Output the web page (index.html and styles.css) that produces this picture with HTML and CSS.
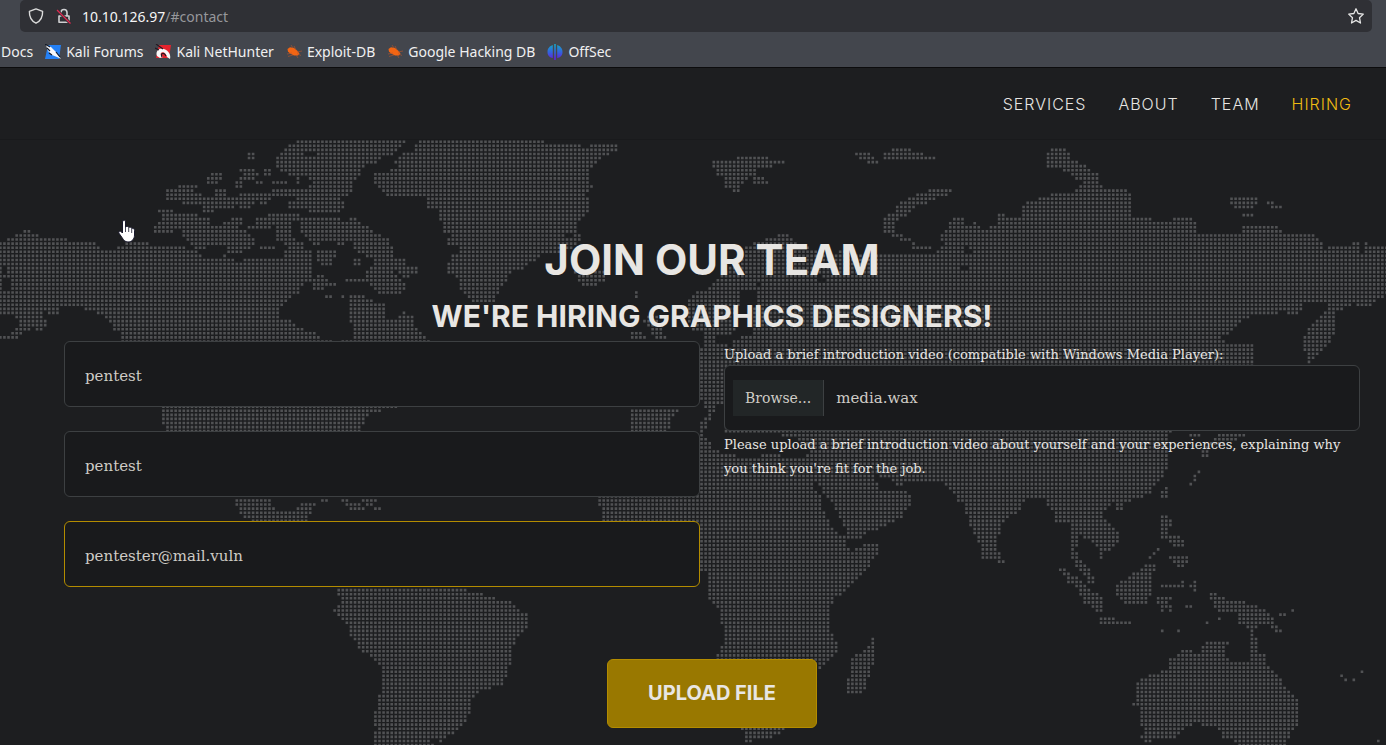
FILE: index.html
```html
<!DOCTYPE html>
<html lang="en">
<head>
<meta charset="utf-8">
<title>Join our team</title>
<link rel="stylesheet" href="styles.css">
</head>
<body>
<div class="browser">
  <div class="urlbar">
    <svg class="ui-icon" viewBox="0 0 16 16" fill="none" stroke="#dcdcdc" stroke-width="1.4" stroke-linejoin="round"><path d="M8 .9 14.6 3.3C14.8 9 12.400 13.200 8 15.200 3.600 13.200 1.200 9 1.400 3.300Z"/></svg>
    <svg class="ui-icon lock" viewBox="0 0 16 16" fill="none"><path d="M5 8V4.500a3 3 0 0 1 6 0V8M3 8h10v6.300H3Z" stroke="#cfcfd1" stroke-width="1.600" stroke-linejoin="round"/><path d="M1 2 14.500 15.500" stroke="#2f3035" stroke-width="3"/><path d="M1 2 14.500 15.500" stroke="#e22850" stroke-width="1.300"/></svg>
    <div class="address"><span class="host">10.10.126.97</span>/#contact</div>
    <button class="star" type="button" aria-label="Bookmark this page"><svg class="ui-icon" viewBox="0 0 16 16" fill="none" stroke="#e6e6e6" stroke-width="1.300" stroke-linejoin="round"><path d="M8 .8 10.100 5.500 15.300 6.100 11.500 9.700 12.500 15 8 12.400 3.500 15 4.500 9.700 .7 6.100 5.900 5.500Z"/></svg></button>
  </div>
  <nav class="bookmarks" aria-label="Bookmarks">
    <a href="#">Docs</a>
    <a href="#"><svg class="ui-icon" viewBox="0 0 16 16"><path d="M3 1h13l-2 14H0Z" fill="#2480f5"/><path d="M1 1 6 3 11 8 16 15 12 13 7 11 3 7Z" fill="#f5f7fa"/><path d="M0 0 5 3M2 4l3 3M4 9l3 2M11 8l4 5" stroke="#151b27" stroke-width="1.200" fill="none"/></svg>Kali Forums</a>
    <a href="#"><svg class="ui-icon" viewBox="0 0 16 16"><path d="M4 1h12l-2 13H1Z" fill="#e5242e"/><path d="M2 12C0 7 5 3 9 5 14 7 16 11 15 15L12 13C11 9 8 7 6 9 5 10 6 12 8 13L5 14Z" fill="#f8f8f8"/><path d="M1 0 8 5M0 4 4 6M7 13C5 9 9 8 11 12" stroke="#251922" stroke-width="1.200" fill="none"/></svg>Kali NetHunter</a>
    <a href="#"><svg class="ui-icon" viewBox="0 0 16 16"><use href="#bug"/></svg>Exploit-DB</a>
    <a href="#"><svg class="ui-icon" viewBox="0 0 16 16"><use href="#bug"/></svg>Google Hacking DB</a>
    <a href="#"><svg class="ui-icon" viewBox="0 0 16 16"><defs><linearGradient id="off" gradientUnits="userSpaceOnUse" x1="0" y1="0" x2="0" y2="16"><stop offset="0" stop-color="#16a9c4"/><stop offset=".5" stop-color="#3265dc"/><stop offset="1" stop-color="#6716df"/></linearGradient></defs><path d="M5.800 1v13C3 13.500 .5 12 .5 8S3 2 5.800 1ZM7.200 0h1.600v16H7.200ZM10.200 1c2.800 1 5.300 3 5.300 7S13 13.500 10.200 14Z" fill="url(#off)"/></svg>OffSec</a>
  </nav>
</div>
<header class="site-nav">
  <nav class="menu" aria-label="Main">
    <a href="#services">SERVICES</a>
    <a href="#about">ABOUT</a>
    <a href="#team">TEAM</a>
    <a class="active" href="#contact">HIRING</a>
  </nav>
</header>
<main class="contact" id="contact">
  <svg class="map" viewBox="0 140 1386 605" preserveAspectRatio="xMidYMin slice" aria-hidden="true">
    <defs>
      <g id="bug"><path d="M1.500 5 4 3.300 8 4 11 6.500 13.500 9.500 12 11.500 8 11.500 4 9.500 2 7.500Z" fill="#f26513"/><path d="M5 1 7 4M8 2 10 6M16 7 11 8M15 11.500l-4-2M1 10l5-1M2 12.500 7 11M12 14l-2-3" stroke="#b9562a" stroke-width=".6" fill="none"/></g>
      <path id="land" d="
M0 244L12 236 25 231 33 231 43 236 72 240 97 243 101 249 113 251 119 244 128 243 143 240 150 240 152 244 178 244 192 249 202 253 204 260 213 256 219 258 240 260 267 257 285 257 285 248 315 250 314 263 313 280 302 285 300 292 292 294 287 302 280 307 280 317 293 318 295 326 307 329 317 333 319 337 333 338 333 342 343 342 343 338 355 337 355 327 350 320 350 293 358 293 370 300 382 302 387 308 387 317 398 317 403 309 415 318 415 327 422 333 432 339 400 407 386 410 370 411 367 421 358 433 167 433 163 423 163 390 123 341 123 332 115 332 113 323 105 317 100 313 90 312 85 308 70 305 63 307 60 313 49 313 45 310 40 315 48 318 48 324 43 332 37 332 35 327 27 331 20 334 20 341 0 341 0 334 12 334 13 330 21 328 20 321 17 316 9 315 0 313Z
M3 265H7V272H3ZM3 280H12V289H3Z
M159 208H174L175 212H195L200 219H212L213 225 222 226 233 216H243L243 225 238 228 247 230 253 235 255 244 252 250H245L240 254 225 256 227 247 213 245 203 251 198 250 191 246 190 240 183 237 185 230H175L173 235H163L155 231 156 225 163 218Z
M167 191L175 188 180 183H199L198 188 190 190 202 191 203 197H217V188H227V195H240L239 202 235 207H220L213 212H204L203 207 192 204 183 203V199H167Z
M212 171H223L222 180 215 186H207L208 180ZM249 151H256V158H249ZM261 159H268V162H261Z
M241 167H253L255 171H260V178L247 179 243 181V187H237V180L242 176ZM241 191H272V199L263 207 258 202 252 207H241Z
M298 140H410L402 145 398 150 395 155 383 157 378 161 372 165 360 168 362 177 353 180 353 190 348 195 337 197 345 201V206L340 211H310L308 207H290V200L303 198 305 195H273V187L307 188 313 185 310 178 285 174 277 165 273 160 282 153 285 147 293 144ZM313 163H325V166H313ZM305 152H317V156H305Z
M265 168H270L275 173 271 178H265ZM273 179H288V183H273ZM296 178H300V186H296ZM257 180H264V183H257ZM285 211H300V218L294 223 293 230 295 238 303 242V248H287L286 243H278L277 230 277 223 270 230H248V226L257 222 258 217H268L271 211ZM261 246H277V251H261Z
M302 216H333L341 218V224L350 219H357L362 224 373 229 377 233 388 237 390 242 394 245 393 252 392 257H405L407 264H418V272H410V280H406L395 270 397 277 407 284 405 291 397 296H387L373 290 370 284H347V277H367V270L372 267V258L362 253 353 248V242L340 245 335 242 313 244 302 233Z
M317 250H337L333 267H325L317 260ZM354 256H362V264H354ZM316 272L329 277 331 282H338L341 288H334L330 286 320 292 313 287ZM325 293H333V297H325ZM342 293H346V300H342Z
M423 140H546V143H582V147H590V143H618V149L610 153 602 157 595 163 590 168V182L593 185 592 190 586 194 590 197 589 210 585 218 577 222V230L581 233 580 240 576 245 563 252 548 253 537 258 528 265 523 271H513L507 279 503 285 497 294 495 303H472L465 295 460 287 457 277 448 272 449 263 453 255 459 252 458 247H448V238L452 233 440 231 443 224 440 218V208L428 207 425 197 417 195 393 198 383 194 380 188 372 181V177L377 171H390L393 167 402 165 392 161 400 157 402 151 415 150 415 143ZM565 233H573V239H565Z
M575 271L585 268 607 271 605 280 600 284 590 287H582L577 278ZM635 290H638V297H635ZM671 301H675V304H671Z
M712 165L715 159H723L725 162 733 160 742 155H768V158H784V162L777 166 757 167 755 174 745 179 742 186 738 191H733L725 186V176L716 174ZM753 176L762 175 769 181 763 187 761 183H753Z
M850 151H870V156L878 159V163H868L866 158H858ZM883 155L888 151 895 147H911L912 151H923V155H935V158H911V162H895V158H883Z
M883 220L892 212 900 203 910 196 925 191 940 187H951V194L938 198 925 203 910 210 902 218 894 224 895 232 907 236 915 241 916 244H931V248H940L942 243 940 233 948 225 952 219H963L966 225 967 240 965 252 972 252 968 245V230L973 221 978 227 988 228 990 224 997 225V212H1003V216H1020L1025 213 1021 210V204L1033 200 1045 196 1057 191 1073 193 1078 187 1083 183 1078 180 1073 177 1067 173 1060 169H1050L1045 164V157L1049 151 1057 147H1061L1068 151V158L1077 160 1080 165 1088 167 1090 171H1100V175L1097 180 1103 190H1118L1123 187 1128 191 1133 196 1132 211 1130 216H1153V220H1170L1171 216H1189L1197 221V228L1199 235H1205L1207 229 1211 233H1238L1240 229 1243 224H1275L1278 229 1287 235H1303L1307 232 1318 237 1322 242 1320 247 1327 249 1328 244H1343L1348 247 1353 241H1358V252H1363V241H1368V244H1386V296L1377 298 1370 304 1367 308H1360L1353 304 1343 307 1342 312H1335V332L1330 340 1322 348 1313 357 1310 362H1307L1304 353 1303 345 1304 335 1308 327 1315 320 1322 313 1328 305 1318 302 1305 301 1302 308 1298 316H1288L1285 310 1278 313H1257L1248 316 1242 320 1235 327 1232 332 1223 334 1222 340 1227 343 1238 345 1248 342 1254 347V366H1200L1171 432 1167 435 1166 457 1167 465 1165 471 1160 478 1153 487 1147 495 1133 499 1121 502V511H1116L1115 503 1110 503 1105 508 1102 515 1108 522 1118 530V539L1112 547 1103 552 1101 557H1099L1097 549 1090 541 1080 536 1077 544 1074 548 1077 553 1084 562 1089 568 1093 576V585L1087 582 1082 573 1075 564 1071 556V522H1061L1060 524H1055L1053 513 1047 507 1045 499H1025L1020 511 1008 517 1000 524 999 535 995 542 997 548 1003 560V564H998L993 558 987 557H982L980 543 973 533 969 522 965 510 962 502H957L952 492 945 486 943 483H903L897 485 903 490 914 497 908 507 903 515 892 522 882 527 868 531 860 537H847L843 525 838 515 832 503 823 492 818 485 813 478 811 482 820 495 823 508 828 518 833 527 845 537 847 547 853 549 867 542H878V552L873 560 865 572 853 583 843 593 835 598 830 608V625L833 637 837 642V653L828 662 820 667 817 670 816 690 783 731 777 735 752 740H745L742 729 717 658V652L722 645 724 638V628L720 623V610L713 604 709 600V573H700L660 570 603 545V506L598 503V497L630 431H715L716 450 700 431 700 422 708 412 700 398V347L705 343 702 336V330H690L688 303 693 293 700 290 710 287 720 277 728 270 747 245 758 242 772 237 782 233 795 237V243L817 250 830 254 845 248 860 253H937L938 249 931 248 913 248 911 242 897 239 887 234 883 231Z
M740 292L753 290 762 279 755 295 753 332 735 339 732 346 718 344 714 334 728 337 735 330 731 318 740 303ZM818 275L827 277 825 283 818 281ZM960 264H968V270H960Z
M714 431H778L783 437 806 440 811 452 800 458 783 456 770 452 750 458 738 456 717 450ZM716 406H724V432H704L709 422ZM873 475L888 476 890 483 897 484 899 488 888 491 880 488Z
M632 330H642L646 336 642 341H632ZM643 320L652 310 660 317 657 327 663 330 666 341H655L652 332ZM632 407H682L673 415 670 425 667 432H631L632 420Z
M236 497H272L273 505 280 512H292L302 501H317L312 510 308 521H253L245 516 237 507ZM322 497H329V500H322ZM338 497L346 499 362 502 365 508H351L346 503ZM363 497H377V500H363ZM367 501H374V504H367ZM379 505L386 512H366ZM350 513H358V516H350ZM375 513H382V516H375ZM395 513H402V516H395Z
M343 586H463L472 591 487 594 497 598 512 602 517 608 524 611 529 616 528 626 522 631 515 641 512 647V662L508 670 504 682 495 687 482 688 472 697 471 711 467 719 459 727 450 735 445 740H440L430 737 435 746H374V733L379 729 374 723V712L378 708V696L382 693V668L374 660 369 654 361 651 358 643 350 636 349 627 343 621 334 612V606L342 604V598L338 595V590Z
M871 638H875L874 662 869 675 865 690 862 695H846L847 676 850 673 851 655 859 653 863 647 870 646Z
M1058 566H1065L1069 573 1075 576 1082 582 1093 590 1102 599V613H1096L1089 606 1081 599 1075 587 1066 581 1063 573H1058ZM1099 618L1103 614H1114L1115 618H1130L1131 622H1154V626H1127L1126 622H1099ZM1160 622H1170V626H1160ZM1156 626L1163 628V633H1159ZM1173 633L1177 627H1183L1180 633ZM1184 622H1192V626H1184ZM1204 618H1208V622H1204ZM1216 614H1220V618H1216Z
M1116 583L1123 579 1133 573 1140 567 1148 561H1151L1154 566 1153 573 1151 593 1147 600 1142 605H1127L1119 600 1116 593ZM1160 585H1179V589H1160ZM1180 581H1184V586H1180ZM1156 594H1171V598L1165 600 1171 604 1170 610 1163 609V613H1156L1160 607 1158 603 1152 600ZM1189 583L1195 578V593L1190 588ZM1184 602H1192V606H1184Z
M1160 517L1164 513 1171 517 1170 525H1167L1168 533H1180L1184 544 1174 548 1170 543 1163 537H1160ZM1155 545H1159V549H1155ZM1151 549H1155V553H1151ZM1147 553H1151V557H1147ZM1168 558L1173 554 1177 557 1181 553H1187L1186 562 1183 568 1176 564ZM1160 489L1165 485H1168V499H1164L1160 496Z
M1185 431H1199L1198 438H1190ZM1222 431H1244L1243 437 1230 441 1208 447 1207 458H1201V452L1207 443ZM1196 468H1200V475H1196ZM1192 475H1196V480H1192ZM1188 480H1192V484H1188Z
M1205 590H1215L1220 597 1230 598H1244L1245 602H1256L1260 607 1265 611 1273 615 1272 621 1280 628 1285 633H1278L1270 629 1265 623H1257L1253 630 1252 638H1257V651H1265V662L1270 668 1277 673 1281 680 1284 685 1294 693 1298 701V724L1290 729 1288 737 1284 746H1237L1230 739 1221 740V730L1213 725 1192 723 1180 730 1177 736H1157L1153 740H1144L1139 736 1143 730 1140 723 1139 709 1131 702 1135 697V680L1143 676 1157 672 1168 669V656L1175 657 1185 647H1192L1193 651H1200L1201 644 1205 639H1228L1227 646 1223 648V654L1229 658 1237 662H1246L1249 655V627L1244 626H1233L1237 622 1235 613 1231 610H1217L1213 604 1208 598Z
M1278 610H1290V606H1293V613H1285V617H1278ZM1311 622H1317V626H1311ZM1339 671H1343V675H1339ZM1343 675H1346V679H1350V683H1343ZM1351 675H1354V679H1351ZM1359 667H1363V671H1359ZM1376 736H1380V740H1376ZM1380 740H1384V744H1380Z
M1227 200L1232 195H1254L1257 200 1253 207H1232ZM1263 199H1273L1275 203H1283V207H1268ZM1239 211H1250L1254 219H1243Z"/>
    </defs>
    <path id="dots" fill="#515254"/>
  </svg>
  <div class="container">
    <h2 class="title">JOIN OUR TEAM</h2>
    <h3 class="subtitle">WE'RE HIRING GRAPHICS DESIGNERS!</h3>
    <form class="form">
      <div class="fields">
        <input class="field" type="text" value="pentest" aria-label="First name">
        <input class="field" type="text" value="pentest" aria-label="Last name">
        <input class="field focused" type="email" value="pentester@mail.vuln" aria-label="Email">
      </div>
      <div class="upload">
        <label class="note" for="video">Upload a brief introduction video (compatible with Windows Media Player):</label>
        <label class="field file" for="video">
          <input class="file-input" id="video" type="file">
          <span class="browse">Browse...</span>
          <span class="filename">media.wax</span>
        </label>
        <p class="note">Please upload a brief introduction video about yourself and your experiences, explaining why you think you're fit for the job.</p>
      </div>
      <button class="submit" type="submit">UPLOAD FILE</button>
    </form>
  </div>
</main>
<svg class="pointer" viewBox="0 0 18 24" aria-hidden="true"><path d="M5 1.500C6.500 .5 7.500 1.500 7.500 3V8C9 7 10.500 7.500 10.700 8.500 12 7.800 13.500 8.300 13.700 9.500 15 9 16.500 9.700 16.500 11.500V16C16.500 20 14 23 10 23 7 23 5.500 21 4 18.500L.8 14C.5 12 2.500 11.500 4.500 14V3Z" fill="#fff" stroke="#17172b" stroke-width="1"/><path d="M7.500 8v5M10.700 9v4M13.700 10v4" stroke="#17172b" stroke-width=".8"/></svg>
<script src="map.js"></script>
</body>
</html>
```
FILE: styles.css
```css
* { box-sizing: border-box; }
body { margin: 0; background: #1d1e20; color: #e8e6e3; font-family: "DejaVu Serif", serif; }
a { color: inherit; text-decoration: none; }
.browser { background: #43464d; border-bottom: 1px solid #0c0c0d; font-family: "Noto Sans", sans-serif; font-size: 14px; color: #f0f0f1; }
.urlbar { display: flex; align-items: center; height: 32px; margin: 0 14px 0 20px; padding: 0 8px; border-radius: 5px; background: #2f3035; }
.ui-icon { display: block; flex: none; width: 16px; height: 16px; }
.lock { margin-left: 12px; }
.address { flex: 1; margin-left: 10px; color: #96979b; }
.host { color: #f5f5f6; }
.star { padding: 0; border: 0; background: none; }
.bookmarks { display: flex; align-items: center; gap: 12px; height: 35px; padding: 4px 0 0 1px; white-space: nowrap; }
.bookmarks a { display: flex; align-items: center; gap: 5px; }
.site-nav { display: flex; justify-content: flex-end; align-items: center; height: 72px; padding-right: 34px; border-bottom: 1px solid #191a1c; }
.menu { display: flex; gap: 32px; font-family: Inter, sans-serif; font-size: 16px; font-weight: 300; letter-spacing: 1px; }
.active { color: #f0bc12; }
.contact { position: relative; overflow: hidden; min-height: calc(100vh - 140px); padding: 96px 26px 18px 64px; }
.map { position: absolute; inset: 0; width: 100%; height: 100%; }
.container { position: relative; }
.title { margin: 0; font: 700 42px/48px Inter, sans-serif; text-align: center; }
.subtitle { margin: 16px 0 8px; font: 700 30px/33px Inter, sans-serif; text-align: center; }
.form { display: grid; grid-template-columns: 1fr 1fr; column-gap: 24px; row-gap: 72px; }
.fields { display: grid; gap: 24px; }
.field { display: block; width: 100%; height: 66px; padding: 22px 20px 18px; border: 1px solid #3d4042; border-radius: 6px; background: #191a1c; color: #cfccc6; font: 15px/24px "DejaVu Serif", serif; outline: 0; }
.focused { border-color: #b38c00; }
.note { display: block; margin: 0; padding-top: 2px; font-size: 13px; line-height: 24px; }
label.note { height: 24px; }
.file { position: relative; display: flex; align-items: center; gap: 12px; padding: 0 8px; }
.file-input { position: absolute; inset: 0; width: 100%; opacity: 0; }
.browse { padding: 6px 12px; border-right: 1px solid #3d4042; background: #222627; font-size: 14px; }
.submit { grid-column: 1 / -1; justify-self: center; padding: 22px 40px; border: 1px solid #b38c00; border-radius: 6px; background: #997800; color: #e8e6e3; font: 700 20px/23px Inter, sans-serif; }
.pointer { position: absolute; left: 118px; top: 219px; width: 18px; height: 24px; }
```
FILE: map.js
```js
// Fills the land outline with a regular grid of dots.
const land = new Path2D(document.getElementById('land').getAttribute('d'));
const ctx = document.createElement('canvas').getContext('2d');
const pitch = 4.07;
let d = '';
for (let y = 141.7; y < 746; y += pitch) {
  for (let x = 1.5; x < 1388; x += pitch) {
    if (ctx.isPointInPath(land, x, y, 'evenodd')) {
      d += `M${(x - 1.3).toFixed(2)} ${(y - 1.3).toFixed(2)}h2.6v2.6h-2.6z`;
    }
  }
}
document.getElementById('dots').setAttribute('d', d);
```
